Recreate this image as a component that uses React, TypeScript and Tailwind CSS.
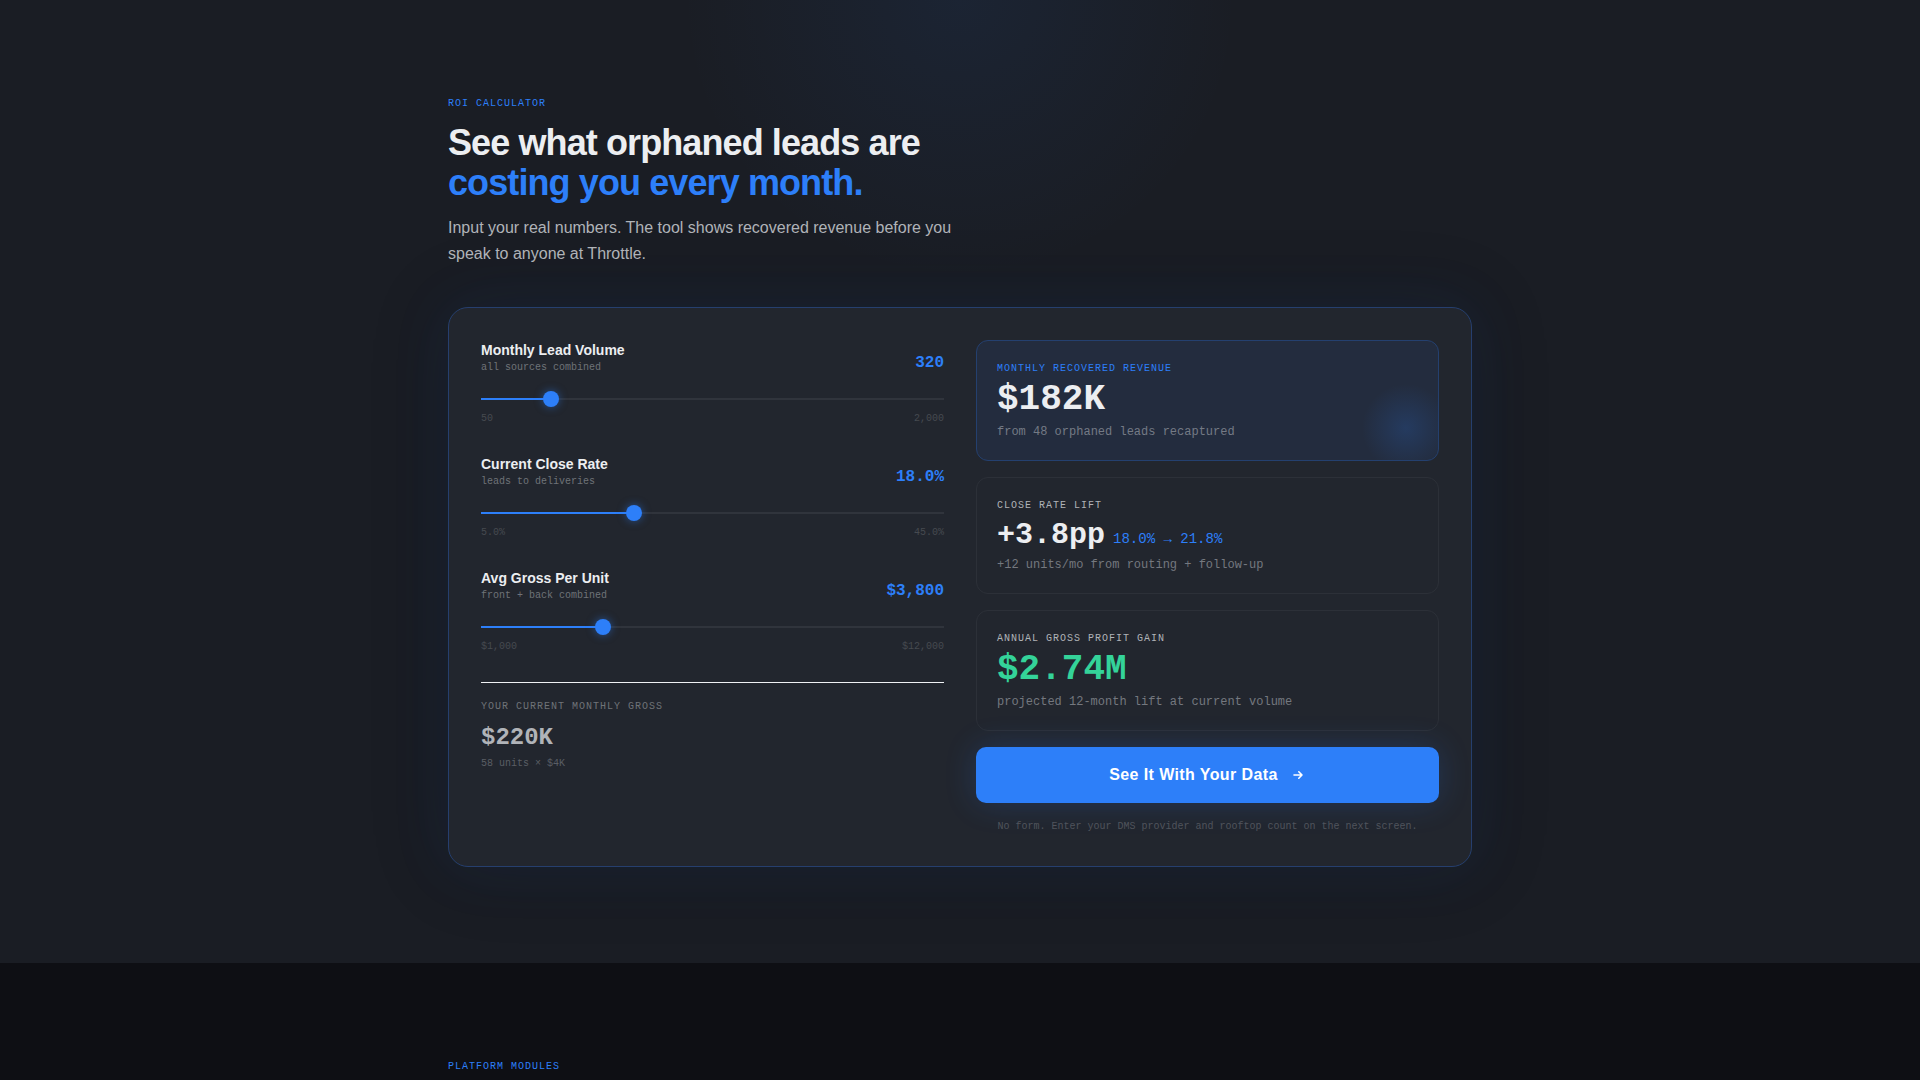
import React, { useState } from 'react';

const sliderClass =
  'block h-4 w-full cursor-pointer appearance-none bg-transparent bg-[length:100%_2px] bg-center bg-no-repeat outline-none ' +
  '[&::-webkit-slider-thumb]:h-4 [&::-webkit-slider-thumb]:w-4 [&::-webkit-slider-thumb]:appearance-none [&::-webkit-slider-thumb]:rounded-full ' +
  '[&::-webkit-slider-thumb]:bg-[#2d7ff9] [&::-webkit-slider-thumb]:shadow-[0_0_8px_rgba(45,127,249,0.5)]';

interface SliderFieldProps {
  id: string;
  label: string;
  hint: string;
  value: number;
  min: number;
  max: number;
  step: number;
  format: (n: number) => string;
  onChange: (n: number) => void;
}

function SliderField({ id, label, hint, value, min, max, step, format, onChange }: SliderFieldProps) {
  const pct = ((value - min) / (max - min)) * 100;

  return (
    <div>
      <div className="flex items-end justify-between">
        <div>
          <label htmlFor={id} className="block text-sm leading-5 font-semibold text-[#eceef1]">{label}</label>
          <p className="font-['Liberation_Mono',monospace] text-[10px] leading-[15px] text-[#6f7378]">{hint}</p>
        </div>
        <span className="font-['Liberation_Mono',monospace] text-base leading-6 font-bold text-[#2d7ff9]">{format(value)}</span>
      </div>
      <input
        id={id}
        type="range"
        min={min}
        max={max}
        step={step}
        value={value}
        onChange={(e) => onChange(Number(e.target.value))}
        className={`mt-4 ${sliderClass}`}
        style={{ backgroundImage: `linear-gradient(to right, #2d7ff9 ${pct}%, #30343c ${pct}%)` }}
      />
      <div className="mt-1 flex justify-between font-['Liberation_Mono',monospace] text-[10px] leading-[15px] text-[#464a50]">
        <span>{format(min)}</span>
        <span>{format(max)}</span>
      </div>
    </div>
  );
}

function Eyebrow({ children }: { children: React.ReactNode }) {
  return (
    <p className="font-['Liberation_Mono',monospace] text-[10px] leading-[15px] tracking-[1px] text-[#2d7ff9] uppercase">{children}</p>
  );
}

const money = (n: number) => `$${n.toLocaleString('en-US')}`;
const percent = (n: number) => `${n.toFixed(1)}%`;
const compact = (n: number) => (n >= 1000000 ? `$${(n / 1000000).toFixed(2)}M` : `$${Math.round(n / 1000)}K`);

function Calculator() {
  const [leads, setLeads] = useState(320);
  const [closeRate, setCloseRate] = useState(18);
  const [gross, setGross] = useState(3800);

  const recaptured = Math.round(leads * 0.15);
  const recovered = recaptured * gross;
  const lift = 3.8;
  const units = Math.round((leads * closeRate) / 100);
  const extraUnits = Math.round((leads * lift) / 100);
  const annual = (recovered + extraUnits * gross) * 12;

  return (
    <div className="mt-10 grid grid-cols-1 gap-8 rounded-[20px] border border-[#263f6e] bg-[#22262e] p-8 shadow-[0_0_60px_rgba(45,127,249,0.1),0_0_80px_rgba(0,0,0,0.2)] md:grid-cols-2">
      <div>
        <div className="space-y-7">
          <SliderField id="leads" label="Monthly Lead Volume" hint="all sources combined" value={leads} min={50} max={2000} step={10} format={(n) => n.toLocaleString('en-US')} onChange={setLeads} />
          <SliderField id="close-rate" label="Current Close Rate" hint="leads to deliveries" value={closeRate} min={5} max={45} step={0.5} format={percent} onChange={setCloseRate} />
          <SliderField id="gross" label="Avg Gross Per Unit" hint="front + back combined" value={gross} min={1000} max={12000} step={100} format={money} onChange={setGross} />
        </div>
        <div className="mt-7 border-t border-[#f0f2f5] pt-4 font-['Liberation_Mono',monospace]">
          <p className="text-[10px] leading-[15px] tracking-[1px] text-[#6f7378] uppercase">Your current monthly gross</p>
          <p className="mt-2 text-2xl leading-8 font-bold text-[#b0b3b8]">{compact(units * gross)}</p>
          <p className="mt-0.5 text-[10px] leading-[15px] text-[#5a5e65]">{units} units × {compact(gross)}</p>
        </div>
      </div>

      <div className="flex flex-col gap-4 font-['Liberation_Mono',monospace]">
        <div className="relative overflow-hidden rounded-xl border border-[#24406f] bg-[#232c3e] p-5">
          <div className="absolute -right-4 -bottom-4 h-24 w-24 rounded-full bg-[radial-gradient(circle,rgba(45,127,249,0.18)_0%,transparent_65%)]" />
          <p className="text-[10px] leading-[15px] tracking-[1px] text-[#2d7ff9] uppercase">Monthly recovered revenue</p>
          <p className="my-1 text-4xl leading-10 font-bold text-[#eceef1]">{compact(recovered)}</p>
          <p className="text-xs leading-4 text-[#747a85]">from {recaptured} orphaned leads recaptured</p>
        </div>

        <div className="rounded-xl border border-[#2c3038] p-5">
          <p className="text-[10px] leading-[15px] tracking-[1px] text-[#b0b3b8] uppercase">Close rate lift</p>
          <div className="my-1 flex items-baseline gap-2">
            <span className="text-3xl leading-9 font-bold text-[#eceef1]">+{lift}pp</span>
            <span className="text-sm leading-5 text-[#2d7ff9]">{percent(closeRate)} → {percent(closeRate + lift)}</span>
          </div>
          <p className="text-xs leading-4 text-[#74787f]">+{extraUnits} units/mo from routing + follow-up</p>
        </div>

        <div className="rounded-xl border border-[#2c3038] p-5">
          <p className="text-[10px] leading-[15px] tracking-[1px] text-[#b0b3b8] uppercase">Annual gross profit gain</p>
          <p className="my-1 text-4xl leading-10 font-bold text-[#34d399]">{compact(annual)}</p>
          <p className="text-xs leading-4 text-[#74787f]">projected 12-month lift at current volume</p>
        </div>

        <button className="flex h-14 items-center justify-center gap-3 rounded-[10px] bg-[#2d7ff9] font-['Liberation_Sans',sans-serif] text-base font-bold tracking-wide text-white shadow-[0_0_32px_rgba(45,127,249,0.2)] hover:bg-[#4a90fa]">
          See It With Your Data
          <svg className="h-4 w-4" viewBox="0 0 16 16" fill="none" stroke="currentColor" strokeWidth="1.6" strokeLinecap="round" strokeLinejoin="round" aria-hidden="true">
            <path d="M4 8h8M8.8 4.8 12 8l-3.2 3.2" />
          </svg>
        </button>
        <p className="text-center text-[10px] leading-[15px] text-[#50545c]">
          No form. Enter your DMS provider and rooftop count on the next screen.
        </p>
      </div>
    </div>
  );
}

export default function App() {
  return (
    <div className="min-h-screen bg-[#0e0f14] font-['Liberation_Sans',Arial,sans-serif]">
      <section className="bg-[radial-gradient(circle_at_50%_0%,rgba(45,127,249,0.07)_0px,transparent_280px)] bg-[#1a1d24] px-6 py-24">
        <div className="mx-auto max-w-5xl">
          <Eyebrow>ROI Calculator</Eyebrow>
          <h2 className="mt-3 text-4xl leading-10 font-bold tracking-tight text-[#eceef1]">
            See what orphaned leads are
            <br />
            <span className="text-[#2d7ff9]">costing you every month.</span>
          </h2>
          <p className="mt-3 max-w-lg text-base leading-[26px] text-[#b0b3b8]">
            Input your real numbers. The tool shows recovered revenue before you speak to anyone at Throttle.
          </p>
          <Calculator />
        </div>
      </section>

      <section className="px-6 pt-24">
        <div className="mx-auto max-w-5xl">
          <Eyebrow>Platform Modules</Eyebrow>
        </div>
      </section>
    </div>
  );
}
